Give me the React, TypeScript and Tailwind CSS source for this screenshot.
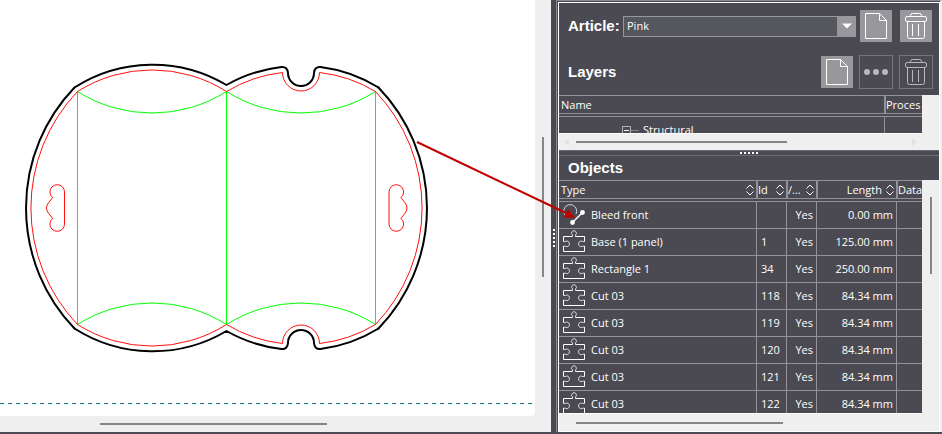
import React, { useState } from 'react';

type ObjectRow = {
  kind: 'bleed' | 'part';
  name: string;
  id: string;
  active: string;
  length: string;
};

const OBJECTS: ObjectRow[] = [
  { kind: 'bleed', name: 'Bleed front', id: '', active: 'Yes', length: '0.00 mm' },
  { kind: 'part', name: 'Base (1 panel)', id: '1', active: 'Yes', length: '125.00 mm' },
  { kind: 'part', name: 'Rectangle 1', id: '34', active: 'Yes', length: '250.00 mm' },
  { kind: 'part', name: 'Cut 03', id: '118', active: 'Yes', length: '84.34 mm' },
  { kind: 'part', name: 'Cut 03', id: '119', active: 'Yes', length: '84.34 mm' },
  { kind: 'part', name: 'Cut 03', id: '120', active: 'Yes', length: '84.34 mm' },
  { kind: 'part', name: 'Cut 03', id: '121', active: 'Yes', length: '84.34 mm' },
  { kind: 'part', name: 'Cut 03', id: '122', active: 'Yes', length: '84.34 mm' },
];

/* ---------- icons ---------- */

function PageIcon() {
  return (
    <svg width="32" height="32" viewBox="0 0 32 32" fill="none" stroke="currentColor" aria-hidden="true">
      <path d="M5.5 3.5H19.5L26.5 10.5V28.5H5.5Z" />
      <path d="M19.5 3.5V10.5H26.5" />
    </svg>
  );
}

function TrashIcon() {
  return (
    <svg width="32" height="32" viewBox="0 0 32 32" fill="none" stroke="currentColor" aria-hidden="true">
      <path d="M10.5 6.5V5.5Q10.5 3.5 12.5 3.5H19.5Q21.5 3.5 21.5 5.5V6.5" />
      <rect x="5.5" y="6.5" width="21" height="5" rx="1.5" />
      <path d="M7.5 11.5V26.5Q7.5 28.5 9.5 28.5H22.5Q24.5 28.5 24.5 26.5V11.5M12.5 14V26M18.5 14V26" />
    </svg>
  );
}

function DotsIcon() {
  return (
    <svg width="32" height="32" viewBox="0 0 32 32" fill="currentColor" aria-hidden="true">
      <circle cx="7" cy="16" r="3" />
      <circle cx="16" cy="16" r="3" />
      <circle cx="25" cy="16" r="3" />
    </svg>
  );
}

function PuzzleIcon() {
  return (
    <svg className="shrink-0" width="24" height="24" viewBox="0 0 24 24" fill="none" stroke="#fff" aria-hidden="true">
      <path d="M10.5 6.5V5A2.4 2.4 0 1 1 13.5 5V6.5" stroke="#d6d6d8" />
      <path d="M1.5 11.5H3.2A2.8 2.8 0 1 1 3.2 16.2H1.5M22.5 11.5H20.8A2.8 2.8 0 1 0 20.8 16.2H22.5" stroke="#d6d6d8" />
      <path d="M10.5 6.5H1.5V11.5M13.5 6.5H22.5V11.5M1.5 16V21.5H22.5V16" />
    </svg>
  );
}

function BleedIcon() {
  return (
    <svg className="shrink-0" width="24" height="24" viewBox="0 0 24 24" fill="none" stroke="#fff" aria-hidden="true">
      <path d="M4.5 13.5A6.5 6.5 0 1 1 14 11" stroke="#d6d6d8" />
      <path d="M10.5 19.5L20.5 9.5" strokeWidth="1.4" />
      <circle cx="10.5" cy="19.5" r="2.4" fill="#fff" stroke="none" />
      <circle cx="20.5" cy="9.5" r="2.4" fill="#fff" stroke="none" />
    </svg>
  );
}

function SortIcon() {
  return (
    <svg className="shrink-0" width="8" height="12" viewBox="0 0 8 12" fill="none" stroke="#fff" aria-hidden="true">
      <path d="M0.5 4.5L4 1L7.5 4.5M0.5 7.5L4 11L7.5 7.5" />
    </svg>
  );
}

/* ---------- small parts ---------- */

function GripDots({ vertical = false }: { vertical?: boolean }) {
  return (
    <div className={vertical ? 'flex flex-col gap-0.5' : 'flex gap-0.5'}>
      {[0, 1, 2, 3, 4].map((n) => (
        <span key={n} className="size-0.5 bg-white" />
      ))}
    </div>
  );
}

function ToolButton({ label, disabled, children }: { label: string; disabled?: boolean; children: React.ReactNode }) {
  return (
    <button
      type="button"
      aria-label={label}
      disabled={disabled}
      className={
        disabled
          ? 'grid size-[34px] place-items-center border border-[#74747b] text-[#b9b9bb]'
          : 'grid size-8 place-items-center bg-[#97979c] text-white'
      }
    >
      {children}
    </button>
  );
}

function HeadCell({ title, first, right, sort = true }: { title: string; first?: boolean; right?: boolean; sort?: boolean }) {
  return (
    <th
      scope="col"
      className={`h-[19px] border-y border-[#929297] p-0 font-normal ${first ? 'pl-0.5' : 'border-l-2'} ${sort ? 'pr-0.5' : ''}`}
    >
      <div className={`flex items-center gap-1 leading-4 whitespace-nowrap ${right ? 'justify-end' : 'justify-between'}`}>
        {title}
        {sort && <SortIcon />}
      </div>
    </th>
  );
}

/* ---------- drawing ---------- */

// Upper half of the pillow box; the lower half is the same set of lines flipped
function BoxHalf() {
  return (
    <>
      <g stroke="#00ff00">
        <path d="M77.5 91.5A139.5 139.5 0 0 0 226.5 91.5A139.5 139.5 0 0 0 375.5 91.5" />
      </g>
      <g stroke="#ff1010">
        <path d="M77.5 91.5A139.5 139.5 0 0 1 226.5 91.5A139.5 139.5 0 0 1 282.5 72.5A18.5 18.5 0 0 0 319.5 72.5A139.5 139.5 0 0 1 375.5 91.5" />
      </g>
      <path
        d="M74.5 87.5A145 145 0 0 1 226.5 85A145 145 0 0 1 281.5 67Q287.5 66.5 288 73A13 13 0 0 0 314 73Q314.5 66.5 320.5 67A145 145 0 0 1 378.5 87.5"
        stroke="#000"
        strokeWidth="2"
        strokeLinecap="round"
        strokeLinejoin="round"
      />
    </>
  );
}

function HangHole() {
  return (
    <path
      d="M64.5 192A7.3 7.3 0 0 0 49.9 192Q49.9 195.5 52.5 197.5Q51 200 48.8 202.3Q46.5 205 46.5 208Q46.5 211 48.8 213.7Q51 216 52.5 218.5Q49.9 220.5 49.9 224A7.3 7.3 0 0 0 64.5 224Z"
      stroke="#ff1010"
    />
  );
}

function BoxDrawing() {
  return (
    <svg className="block" width="535" height="400" viewBox="0 0 535 400" fill="none" role="img" aria-label="Pillow box">
      <path d="M77.5 91.5V324.5M226.5 91.5V324.5M375.5 91.5V324.5" stroke="#00ff00" />
      <BoxHalf />
      <g transform="matrix(1 0 0 -1 0 416)">
        <BoxHalf />
      </g>
      <path d="M77.5 91.5A169 169 0 0 0 77.5 324.5M375.5 91.5A169 169 0 0 1 375.5 324.5" stroke="#ff1010" />
      <path
        d="M74.5 87.5A174 174 0 0 0 74.5 328.5M378.5 87.5A174 174 0 0 1 378.5 328.5"
        stroke="#000"
        strokeWidth="2"
        strokeLinecap="round"
      />
      <HangHole />
      <g transform="matrix(-1 0 0 1 453.5 0)">
        <HangHole />
      </g>
    </svg>
  );
}

function Canvas() {
  return (
    <section className="flex min-w-0 flex-1 flex-col bg-[#efefef]">
      <div className="flex min-h-0 flex-1">
        <div className="min-w-0 flex-1 overflow-hidden rounded-br-sm bg-white">
          <BoxDrawing />
          <svg className="block w-full" height="8" aria-hidden="true">
            <line x1="0" x2="100%" y1="3.5" y2="3.5" stroke="#137373" strokeDasharray="4 4" />
          </svg>
        </div>
        <div className="flex w-4 justify-center pt-[137px]">
          <div className="h-[140px] w-0.5 bg-[#868686]" />
        </div>
      </div>
      <div className="flex h-4 items-center pl-[100px]">
        <div className="h-0.5 w-[227px] bg-[#868686]" />
      </div>
    </section>
  );
}

/* ---------- side panel ---------- */

function ArticleBar() {
  const [article, setArticle] = useState('Pink');
  return (
    <div className="flex items-center pt-[7px] pr-[7px] pl-[9px]">
      <label htmlFor="article" className="w-[55px] font-[family-name:'Liberation_Sans',sans-serif] text-[15px] leading-5 font-bold">
        Article:
      </label>
      <div className="relative mr-1 min-w-0 flex-1">
        <select
          id="article"
          value={article}
          onChange={(e) => setArticle(e.target.value)}
          className="block h-[21px] w-full appearance-none rounded-none border border-[#97979c] bg-[#56565d] pl-[3px] text-[11px] leading-4 text-white"
        >
          <option>Pink</option>
        </select>
        <span className="pointer-events-none absolute inset-y-0 right-0 grid w-[19px] place-items-center bg-[#97979c]">
          <svg width="10" height="6" viewBox="0 0 10 6" fill="#fff" aria-hidden="true">
            <path d="M0 0.5H10L5 5.5Z" />
          </svg>
        </span>
      </div>
      <div className="flex gap-2">
        <ToolButton label="New article"><PageIcon /></ToolButton>
        <ToolButton label="Delete article"><TrashIcon /></ToolButton>
      </div>
    </div>
  );
}

function LayersSection() {
  return (
    <section>
      <div className="flex items-center justify-between pt-[13px] pr-1.5 pb-1.5 pl-[9px]">
        <h2 className="font-[family-name:'Liberation_Sans',sans-serif] text-[15px] leading-5 font-bold">Layers</h2>
        <div className="flex items-center gap-1.5">
          <ToolButton label="New layer"><PageIcon /></ToolButton>
          <ToolButton label="Layer options" disabled><DotsIcon /></ToolButton>
          <ToolButton label="Delete layer" disabled><TrashIcon /></ToolButton>
        </div>
      </div>
      <div className="bg-[#efefef] pr-[17px]">
        <div className="h-[39px] overflow-hidden border-b border-white bg-[#4b4a52]">
          <table className="w-full table-fixed border-separate border-spacing-0 text-left">
            <colgroup>
              <col />
              <col className="w-[38px]" />
            </colgroup>
            <thead>
              <tr>
                <HeadCell title="Name" first sort={false} />
                <HeadCell title="Proces" sort={false} />
              </tr>
              <tr className="h-0.5" aria-hidden="true" />
            </thead>
            <tbody>
              <tr>
                <td className="h-[27px] border-t border-[#929297] p-0 pl-[63px]">
                  <div className="flex items-center gap-px leading-4">
                    <svg width="20" height="9" viewBox="0 0 20 9" fill="none" aria-hidden="true">
                      <path d="M0.5 0.5H8.5V8.5H0.5Z" stroke="#b4b4b8" />
                      <path d="M2 4.5H7" stroke="#fff" />
                      <path d="M9 4.5H17" stroke="#85858b" />
                    </svg>
                    Structural
                  </div>
                </td>
                <td className="border-t border-l border-[#929297] p-0" />
              </tr>
            </tbody>
          </table>
        </div>
        <div className="flex h-4 items-center px-[5px]">
          <svg width="5" height="8" viewBox="0 0 5 8" fill="#e2e2e2" aria-hidden="true">
            <path d="M5 0V8L0 4Z" />
          </svg>
          <div className="ml-[7px] h-0.5 w-[211px] bg-[#868686]" />
          <svg className="ml-auto" width="5" height="8" viewBox="0 0 5 8" fill="#e2e2e2" aria-hidden="true">
            <path d="M0 0V8L5 4Z" />
          </svg>
        </div>
      </div>
    </section>
  );
}

function ObjectsSection() {
  return (
    <section className="flex min-h-0 flex-1 flex-col">
      <h2 className="pt-0.5 pb-0.5 pl-[9px] font-[family-name:'Liberation_Sans',sans-serif] text-[15px] leading-5 font-bold">
        Objects
      </h2>
      <div className="flex min-h-0 flex-1 bg-[#efefef]">
        <div className="flex min-w-0 flex-1 flex-col">
          <div className="min-h-0 flex-1 overflow-hidden border-b border-white bg-[#4b4a52]">
            <table className="w-full table-fixed border-separate border-spacing-0 text-left">
              <colgroup>
                <col />
                <col className="w-[30px]" />
                <col className="w-[30px]" />
                <col className="w-20" />
                <col className="w-[26px]" />
              </colgroup>
              <thead>
                <tr>
                  <HeadCell title="Type" first />
                  <HeadCell title="Id" />
                  <HeadCell title="/..." />
                  <HeadCell title="Length" right />
                  <HeadCell title="Data" sort={false} />
                </tr>
                <tr className="h-0.5" aria-hidden="true" />
              </thead>
              <tbody>
                {OBJECTS.map((row, i) => (
                  <tr key={i}>
                    <td className="h-[27px] border-t border-[#929297] p-0 pl-[3px]">
                      <div className="flex h-[26px] items-center gap-[5px] leading-4">
                        {row.kind === 'bleed' ? <BleedIcon /> : <PuzzleIcon />}
                        {row.name}
                      </div>
                    </td>
                    <td className="border-t border-l border-[#929297] p-0 pl-1">{row.id}</td>
                    <td className="border-t border-l border-[#929297] p-0 pr-[3px] text-right">{row.active}</td>
                    <td className="border-t border-l border-[#929297] p-0 pr-[3px] text-right">{row.length}</td>
                    <td className="border-t border-l border-[#929297] p-0" />
                  </tr>
                ))}
              </tbody>
            </table>
          </div>
          <div className="flex h-[17px] items-center pl-[17px]">
            <div className="h-0.5 w-[207px] bg-[#868686]" />
          </div>
        </div>
        <div className="flex w-[17px] justify-center pt-[17px]">
          <div className="h-[77px] w-0.5 bg-[#868686]" />
        </div>
      </div>
    </section>
  );
}

export default function App() {
  return (
    <div className="relative flex h-screen flex-col overflow-hidden bg-[#4b4a52] font-[family-name:'Open_Sans',sans-serif] text-[11px] leading-4 text-white">
      <div className="flex min-h-0 flex-1">
        <Canvas />
        <div className="grid w-[5px] place-items-center pt-11">
          <GripDots vertical />
        </div>
        <aside className="flex w-[386px] shrink-0 border-t border-r-2 border-l border-t-[#8c8c90] border-r-[#efefef] border-l-[#8c8c90] pt-px pl-px">
          <div className="flex min-w-0 flex-1 flex-col border border-white">
            <ArticleBar />
            <LayersSection />
            <div className="grid h-1.5 place-items-center border-y border-[#6d6c75]">
              <GripDots />
            </div>
            <ObjectsSection />
          </div>
        </aside>
      </div>
      <div className="h-0.5" />

      {/* callout from the outline to its row */}
      <svg className="pointer-events-none absolute top-0 right-[362px]" width="170" height="230" viewBox="0 0 170 230" aria-hidden="true">
        <path d="M7 142L156 213" stroke="#c00000" strokeWidth="2" fill="none" />
        <path d="M165 218L154 217.5L158 209Z" fill="#c00000" />
      </svg>
    </div>
  );
}
